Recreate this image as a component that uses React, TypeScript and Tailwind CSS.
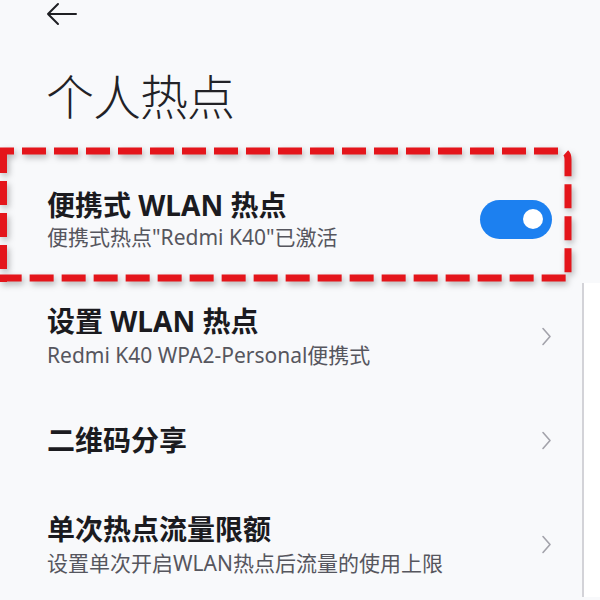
import React from "react";

type Row = {
  title: string;
  subtitle?: string;
  height: string;
};

const rows: Row[] = [
  { title: "设置 WLAN 热点", subtitle: "Redmi K40 WPA2-Personal便携式", height: "h-[106px]" },
  { title: "二维码分享", height: "h-[102px]" },
  { title: "单次热点流量限额", subtitle: "设置单次开启WLAN热点后流量的使用上限", height: "h-[106px]" },
];

function Chevron() {
  return (
    <svg width="11" height="19" viewBox="0 0 11 19" fill="none" className="shrink-0">
      <path d="M2 1.5 L9 9.5 L2 17.5" stroke="#a3a3ab" strokeWidth="1.6" strokeLinecap="round" strokeLinejoin="round" />
    </svg>
  );
}

export default function App() {
  return (
    <div
      className="relative h-[600px] w-[600px] overflow-hidden bg-[#f8f9fb] text-[#1b1b1f]"
      style={{ fontFamily: '"Noto Sans", "Noto Sans CJK SC", sans-serif' }}
    >
      {/* header */}
      <div className="pl-[46px] pt-[2px]">
        <svg width="32" height="26" viewBox="0 0 32 26" fill="none">
          <path d="M2 12 H30 M2 12 L12 2 M2 12 L12 22" stroke="#1f1f23" strokeWidth="2" strokeLinecap="round" strokeLinejoin="round" />
        </svg>
        <h1 className="mt-[40px] text-[48px] font-extralight leading-[58px] tracking-[-1px] text-[#222226]">
          个人热点
        </h1>
      </div>

      {/* highlighted row */}
      <div className="relative mt-[25px] flex h-[132px] items-center justify-between pl-[47px] pr-[48px]">
        <div className="pt-[4px]">
          <div className="text-[28px] font-bold leading-[34px]">便携式 WLAN 热点</div>
          <div className="mt-[2px] text-[21px] leading-[26px] text-[#56565e]">
            便携式热点"Redmi K40"已激活
          </div>
        </div>
        <div className="mt-[4px] flex h-[39px] w-[72px] items-center justify-end rounded-full bg-[#1c80f0] pr-[9px]">
          <div className="h-[20px] w-[20px] rounded-full bg-white" />
        </div>

        <svg
          className="pointer-events-none absolute left-0 top-[-4px] drop-shadow-[2px_3px_3px_rgba(0,0,0,0.28)]"
          width="574"
          height="140"
          viewBox="0 0 574 140"
          fill="none"
        >
          <path
            d="M-10 4 H560 Q568 4 568 12 V131 H-10"
            stroke="#e4151b"
            strokeWidth="7"
            strokeDasharray="24 8"
            strokeLinejoin="round"
          />
          <path d="M3.5 -4 V135" stroke="#e4151b" strokeWidth="7" strokeDasharray="24 8" strokeDashoffset="-6" />
        </svg>
      </div>

      {/* other rows */}
      <div className="flex">
        <div className="w-[584px] border-r-2 border-[#d3d3d8]">
          {rows.map((row) => (
            <div key={row.title} className={`flex items-center justify-between pl-[47px] pr-[30px] ${row.height}`}>
              <div>
                <div className="text-[28px] font-bold leading-[34px]">{row.title}</div>
                {row.subtitle && (
                  <div className="mt-[4px] text-[21px] leading-[26px] text-[#56565e]">{row.subtitle}</div>
                )}
              </div>
              <Chevron />
            </div>
          ))}
        </div>
        <div className="flex-1 bg-white" />
      </div>
    </div>
  );
}
